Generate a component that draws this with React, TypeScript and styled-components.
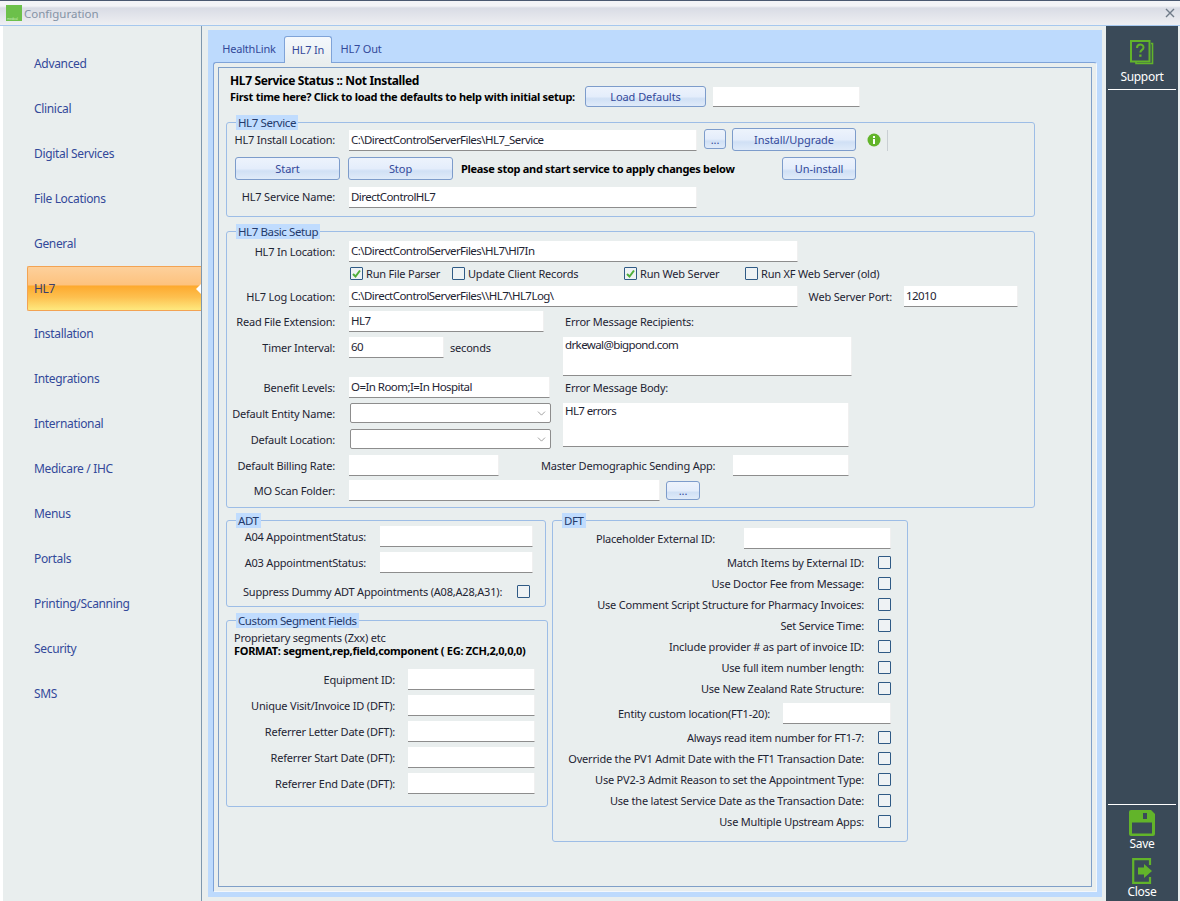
import React from 'react';
import styled, { createGlobalStyle } from 'styled-components';
import { ChevronDown } from 'lucide-react';

const GlobalStyle = createGlobalStyle`
  html, body { margin: 0; padding: 0; background: #e9eeee; }
  * { box-sizing: border-box; }
  body { font-family: "Noto Sans", "Liberation Sans", sans-serif; font-size: 11px; letter-spacing: -0.2px; color: #1e2433; }
`;

const Window = styled.div`
  width: 1180px;
  height: 901px;
  display: flex;
  flex-direction: column;
  overflow: hidden;
  background: #e9eeee;
`;

const TitleBar = styled.div`
  height: 26px;
  flex: none;
  display: flex;
  align-items: center;
  padding: 0 5px 0 6px;
  border-top: 1px solid #4a5870;
  border-bottom: 1px solid #a6c8ee;
  background: linear-gradient(#f3f4f7 0, #f3f4f7 5px, #d9dce5 7px, #eeeff2 100%);
`;

const TitleText = styled.span`
  margin-left: 2px;
  font-size: 11.5px;
  letter-spacing: 0;
  color: #8593a5;
  flex: 1;
`;

const Main = styled.div`
  flex: 1;
  display: flex;
  min-height: 0;
`;

const Sidebar = styled.nav`
  width: 202px;
  flex: none;
  padding: 15px 0 0 24px;
  background: #e9eeee;
  border-left: 3px solid #fff;
  border-right: 1px solid #7f97ad;
`;

const NavItem = styled.div<{ $active?: boolean }>`
  position: relative;
  height: 45px;
  display: flex;
  align-items: center;
  padding-left: 7px;
  font-size: 12px;
  letter-spacing: -0.33px;
  color: ${(p) => (p.$active ? '#3a3f6e' : '#33499a')};
  ${(p) =>
    p.$active &&
    `
    background: linear-gradient(#fdd09b 0, #fdc27e 42%, #fda92e 44%, #fdc04f 70%, #fee97f 100%);
    border: 1px solid #f3a353;
    border-right: none;
    border-radius: 2px 0 0 2px;
    padding-left: 6px;
    &::after {
      content: '';
      position: absolute;
      right: 0;
      top: 17px;
      border: 5px solid transparent;
      border-right-color: #fff;
      border-left: none;
    }
  `}
`;

const Content = styled.div`
  flex: 1;
  min-width: 0;
  padding: 4px 4px 4px 6px;
`;

const TabPanel = styled.div`
  height: 100%;
  display: flex;
  flex-direction: column;
  background: #bddafd;
  padding: 0 5px 5px 5px;
`;

const TabStrip = styled.div`
  height: 32px;
  flex: none;
  display: flex;
  align-items: flex-end;
  padding-left: 1px;
`;

const Tab = styled.div<{ $active?: boolean; $w: number }>`
  width: ${(p) => p.$w}px;
  height: 26px;
  text-align: center;
  line-height: 25px;
  font-size: 11px;
  color: #33499a;
  ${(p) =>
    p.$active &&
    `
    background: linear-gradient(#f4f8fd, #e9eeee);
    border: 1px solid #7fa3d8;
    border-bottom: none;
    border-radius: 3px 3px 0 0;
    margin-bottom: -1px;
    height: 27px;
    position: relative;
  `}
`;

const TabPage = styled.div`
  flex: 1;
  padding: 4px;
  background: #e9eeee;
  border: 1px solid #7fa3d8;
  border-right-color: #f3f7fc;
  border-bottom-color: #f3f7fc;
  border-radius: 3px 3px 0 0;
`;

const Page = styled.div`
  height: 100%;
  padding: 5px 0 0 7px;
  border: 1px solid #7f9fc8;
`;

const StatusLine = styled.div`
  height: 16px;
  margin-left: 4px;
  line-height: 16px;
  font-size: 12px;
  font-weight: 700;
  letter-spacing: -0.35px;
  color: #000;
`;

const Row = styled.div<{ $h?: number; $mt?: number; $end?: boolean }>`
  display: flex;
  align-items: ${(p) => (p.$end ? 'flex-end' : 'center')};
  height: ${(p) => p.$h ?? 21}px;
  margin-top: ${(p) => p.$mt ?? 0}px;
`;

const BoldText = styled.span<{ $ml?: number; $w?: number }>`
  flex: none;
  font-weight: 700;
  letter-spacing: -0.29px;
  color: #000;
  white-space: nowrap;
  margin-left: ${(p) => p.$ml ?? 0}px;
  ${(p) => (p.$w ? `width: ${p.$w}px;` : '')}
`;

const PlainText = styled.span<{ $ml?: number; $w?: number }>`
  flex: none;
  white-space: nowrap;
  margin-left: ${(p) => p.$ml ?? 0}px;
  ${(p) => (p.$w ? `width: ${p.$w}px;` : '')}
`;

const Label = styled.label<{ $w: number; $mb?: number }>`
  width: ${(p) => p.$w}px;
  flex: none;
  margin-bottom: ${(p) => p.$mb ?? 0}px;
  text-align: right;
  white-space: nowrap;
`;

const TextInput = styled.input<{ $w: number; $h?: number; $ml?: number }>`
  width: ${(p) => p.$w}px;
  height: ${(p) => p.$h ?? 21}px;
  flex: none;
  margin: 0 0 0 ${(p) => p.$ml ?? 0}px;
  padding: 0 2px 1px 2px;
  border: none;
  border-bottom: 1px solid #8d8d8d;
  border-right: 1px solid #f0f0f0;
  background: #fff;
  font: inherit;
  font-size: 11.5px;
  letter-spacing: -0.55px;
  color: #1e2433;
  outline: none;
`;

const TextArea = styled.textarea<{ $w: number; $h: number; $mt: number; $pt: number }>`
  display: block;
  width: ${(p) => p.$w}px;
  height: ${(p) => p.$h}px;
  margin: ${(p) => p.$mt}px 0 0 0;
  padding: ${(p) => p.$pt}px 2px 0 2px;
  border: none;
  border-bottom: 1px solid #8d8d8d;
  border-right: 1px solid #f0f0f0;
  background: #fff;
  font: inherit;
  font-size: 11.5px;
  letter-spacing: -0.6px;
  color: #1e2433;
  resize: none;
  outline: none;
  overflow: hidden;
`;

const Button = styled.button<{ $w: number; $h?: number; $ml?: number; $mb?: number }>`
  width: ${(p) => p.$w}px;
  height: ${(p) => p.$h ?? 23}px;
  flex: none;
  margin: 0 0 ${(p) => p.$mb ?? 0}px ${(p) => p.$ml ?? 0}px;
  padding: 0;
  border: 1px solid #7d9ccb;
  border-radius: 3px;
  background: linear-gradient(#edf3fc 0, #e4edfb 50%, #d0e0f5 62%, #e0ebf9 100%);
  font: inherit;
  letter-spacing: -0.05px;
  color: #33499a;
`;

const SelectBox = styled.div<{ $w: number; $ml: number }>`
  width: ${(p) => p.$w}px;
  height: 20px;
  flex: none;
  margin-left: ${(p) => p.$ml}px;
  display: flex;
  align-items: center;
  justify-content: flex-end;
  padding-right: 2px;
  background: #fff;
  border: 1px solid #8d8d8d;
  border-radius: 2px;
  color: #7a7a7a;
`;

const CheckBox = styled.span<{ $ml?: number }>`
  width: 13px;
  height: 13px;
  flex: none;
  margin-left: ${(p) => p.$ml ?? 0}px;
  display: inline-flex;
  align-items: center;
  justify-content: center;
  background: #eef2f4;
  border: 1px solid #2f5a85;
  border-radius: 1px;
`;

const CheckOption = styled.span<{ $w: number; $ml?: number }>`
  width: ${(p) => p.$w}px;
  flex: none;
  margin-left: ${(p) => p.$ml ?? 0}px;
  display: flex;
  align-items: center;
  gap: 3px;
  white-space: nowrap;
`;

const GroupBox = styled.fieldset<{ $w: number; $mt?: number; $ml?: number; $pb: number }>`
  width: ${(p) => p.$w}px;
  flex: none;
  margin: ${(p) => p.$mt ?? 0}px 0 0 ${(p) => p.$ml ?? 0}px;
  padding: 0 0 ${(p) => p.$pb}px 0;
  border: 1px solid #9dbde6;
  border-radius: 3px;
  min-width: 0;
`;

const GroupTitle = styled.legend`
  height: 15px;
  margin-left: 9px;
  padding: 0 2px;
  background: #c0dcfe;
  line-height: 15px;
  font-size: 11.5px;
  letter-spacing: -0.4px;
  color: #243a6b;
`;

const Columns = styled.div`
  display: flex;
  align-items: flex-start;
`;

const Column = styled.div<{ $w: number; $ml?: number }>`
  width: ${(p) => p.$w}px;
  flex: none;
  margin-left: ${(p) => p.$ml ?? 0}px;
`;

const InfoDivider = styled.span`
  width: 1px;
  height: 21px;
  margin: 0 0 0 6px;
  background: #c9cfd3;
`;

const InfoIcon = styled.svg`
  flex: none;
  margin: 0 0 4px 11px;
`;

const ActionRail = styled.aside`
  width: 72px;
  flex: none;
  margin-right: 2px;
  padding-bottom: 1px;
  display: flex;
  flex-direction: column;
  background: #3a4a58;
  color: #fff;
  font-size: 12px;
  letter-spacing: -0.3px;
`;

const RailItem = styled.div<{ $h: number; $gap?: number }>`
  height: ${(p) => p.$h}px;
  display: flex;
  flex-direction: column;
  align-items: center;
  justify-content: flex-end;
  gap: ${(p) => p.$gap ?? 0}px;
  line-height: 16px;
`;

const RailRule = styled.div<{ $mt?: number }>`
  height: 1px;
  margin: ${(p) => p.$mt ?? 0}px 2px 0 2px;
  background: #fff;
`;

const RailSpacer = styled.div`
  flex: 1;
`;

const navItems = [
  'Advanced', 'Clinical', 'Digital Services', 'File Locations', 'General', 'HL7', 'Installation', 'Integrations',
  'International', 'Medicare / IHC', 'Menus', 'Portals', 'Printing/Scanning', 'Security', 'SMS',
];

const firstDftChecks = [
  'Match Items by External ID:',
  'Use Doctor Fee from Message:',
  'Use Comment Script Structure for Pharmacy Invoices:',
  'Set Service Time:',
  'Include provider # as part of invoice ID:',
  'Use full item number length:',
  'Use New Zealand Rate Structure:',
];

const secondDftChecks = [
  'Always read item number for FT1-7:',
  'Override the PV1 Admit Date with the FT1 Transaction Date:',
  'Use PV2-3 Admit Reason to set the Appointment Type:',
  'Use the latest Service Date as the Transaction Date:',
  'Use Multiple Upstream Apps:',
];

const customFields = [
  'Equipment ID:',
  'Unique Visit/Invoice ID (DFT):',
  'Referrer Letter Date (DFT):',
  'Referrer Start Date (DFT):',
  'Referrer End Date (DFT):',
];

const Tick = () => (
  <svg width="11" height="11" viewBox="0 0 11 11">
    <path d="M2 6l2.5 2.5L9 2.5" fill="none" stroke="#4fae3a" strokeWidth="2" />
  </svg>
);

const Check = ({ checked, ml }: { checked?: boolean; ml?: number }) => (
  <CheckBox $ml={ml}>{checked && <Tick />}</CheckBox>
);

const AppIcon = () => (
  <svg width="16" height="16" viewBox="0 0 16 16">
    <rect width="16" height="16" fill="#6cc04a" />
    <text x="1" y="14.500" fontSize="3.500" fontFamily="Liberation Sans, sans-serif" fill="#c4ebb2">medical</text>
  </svg>
);

const CloseX = () => (
  <svg width="10" height="10" viewBox="0 0 10 10">
    <path d="M1 1l8 8M9 1l-8 8" stroke="#6f7b88" strokeWidth="1.4" />
  </svg>
);

const SupportIcon = () => (
  <svg width="24" height="26" viewBox="0 0 24 26" fill="none">
    <path d="M21 3.5h1.5v20H6V22" stroke="#62b42a" strokeWidth="1.6" />
    <rect x="1" y="1" width="18.5" height="20.5" stroke="#62b42a" strokeWidth="2" />
    <path d="M7 8c0-4.5 6.500-4.500 6.500-.6 0 2.600-3.200 2.300-3.200 5.100" stroke="#62b42a" strokeWidth="2" />
    <rect x="9.200" y="14.500" width="2.300" height="2.300" fill="#62b42a" />
  </svg>
);

const SaveIcon = () => (
  <svg width="26" height="26" viewBox="0 0 26 26">
    <path
      fillRule="evenodd"
      d="M2 0h20l4 4v20a2 2 0 0 1-2 2H2a2 2 0 0 1-2-2V2a2 2 0 0 1 2-2zM14 3v6h4V3zM3 12.500v11h20v-11z"
      fill="#62b42a"
    />
  </svg>
);

const ExitIcon = () => (
  <svg width="20" height="26" viewBox="0 0 20 26" fill="none">
    <path d="M18 7V1.200H1.200v23.600H18V19" stroke="#62b42a" strokeWidth="2.200" />
    <path d="M6 9.500h6V6l8 7-8 7v-3.500H6z" fill="#62b42a" />
  </svg>
);

const App: React.FC = () => {
  return (
    <>
      <GlobalStyle />
      <Window>
        <TitleBar>
          <AppIcon />
          <TitleText>Configuration</TitleText>
          <CloseX />
        </TitleBar>
        <Main>
          <Sidebar>
            {navItems.map((item) => (
              <NavItem key={item} $active={item === 'HL7'}>
                {item}
              </NavItem>
            ))}
          </Sidebar>
          <Content>
            <TabPanel>
              <TabStrip>
                <Tab $w={70}>HealthLink</Tab>
                <Tab $w={48} $active>HL7 In</Tab>
                <Tab $w={58}>HL7 Out</Tab>
              </TabStrip>
              <TabPage>
                <Page>
                  <StatusLine>HL7 Service Status :: Not Installed</StatusLine>
                  <Row $mt={-3}>
                    <BoldText $ml={4} $w={355}>First time here? Click to load the defaults to help with initial setup:</BoldText>
                    <Button $w={121} $h={21}>Load Defaults</Button>
                    <TextInput $w={147} $h={20} $ml={7} readOnly />
                  </Row>

                  <GroupBox $w={809} $mt={8} $pb={8}>
                    <GroupTitle>HL7 Service</GroupTitle>
                    <Row $h={23} $mt={-2} $end>
                      <Label $w={108} $mb={4}>HL7 Install Location:</Label>
                      <TextInput $w={348} $ml={14} readOnly defaultValue="C:\DirectControlServerFiles\HL7_Service" />
                      <Button $w={22} $h={20} $ml={7} $mb={2}>...</Button>
                      <Button $w={124} $ml={6}>Install/Upgrade</Button>
                      <InfoIcon width="14" height="14" viewBox="0 0 14 14">
                        <circle cx="7" cy="7" r="6.500" fill="#62b42a" />
                        <rect x="6" y="6" width="2" height="5" fill="#fff" />
                        <rect x="6" y="3" width="2" height="2" fill="#fff" />
                      </InfoIcon>
                      <InfoDivider />
                    </Row>
                    <Row $h={23} $mt={6}>
                      <Button $w={105} $ml={8}>Start</Button>
                      <Button $w={105} $ml={8}>Stop</Button>
                      <BoldText $ml={8} $w={321}>Please stop and start service to apply changes below</BoldText>
                      <Button $w={74}>Un-install</Button>
                    </Row>
                    <Row $mt={7}>
                      <Label $w={108} $mb={3}>HL7 Service Name:</Label>
                      <TextInput $w={348} $ml={14} readOnly defaultValue="DirectControlHL7" />
                    </Row>
                  </GroupBox>

                  <GroupBox $w={809} $mt={7} $pb={6}>
                    <GroupTitle>HL7 Basic Setup</GroupTitle>
                    <Row $mt={2}>
                      <Label $w={108}>HL7 In Location:</Label>
                      <TextInput $w={449} $ml={14} readOnly defaultValue="C:\DirectControlServerFiles\HL7\Hl7In" />
                    </Row>
                    <Row $h={22}>
                      <CheckOption $w={102} $ml={123}><Check checked />Run File Parser</CheckOption>
                      <CheckOption $w={172}><Check />Update Client Records</CheckOption>
                      <CheckOption $w={121}><Check checked />Run Web Server</CheckOption>
                      <CheckOption $w={150}><Check />Run XF Web Server (old)</CheckOption>
                    </Row>
                    <Row $mt={2}>
                      <Label $w={108}>HL7 Log Location:</Label>
                      <TextInput $w={449} $ml={14} readOnly defaultValue="C:\DirectControlServerFiles\\HL7\HL7Log\" />
                      <Label $w={94}>Web Server Port:</Label>
                      <TextInput $w={114} $ml={12} readOnly defaultValue="12010" />
                    </Row>
                    <Columns>
                      <Column $w={325}>
                        <Row $mt={4}>
                          <Label $w={108}>Read File Extension:</Label>
                          <TextInput $w={195} $ml={14} readOnly defaultValue="HL7" />
                        </Row>
                        <Row $h={22} $mt={4}>
                          <Label $w={108}>Timer Interval:</Label>
                          <TextInput $w={95} $ml={14} readOnly defaultValue="60" />
                          <PlainText $ml={6}>seconds</PlainText>
                        </Row>
                        <Row $mt={19}>
                          <Label $w={108}>Benefit Levels:</Label>
                          <TextInput $w={201} $ml={14} readOnly defaultValue="O=In Room;I=In Hospital" />
                        </Row>
                        <Row $h={20} $mt={5}>
                          <Label $w={108}>Default Entity Name:</Label>
                          <SelectBox $w={201} $ml={15}><ChevronDown size={13} strokeWidth={1.3} /></SelectBox>
                        </Row>
                        <Row $h={20} $mt={6}>
                          <Label $w={108}>Default Location:</Label>
                          <SelectBox $w={201} $ml={15}><ChevronDown size={13} strokeWidth={1.3} /></SelectBox>
                        </Row>
                      </Column>
                      <Column $w={300} $ml={11}>
                        <Row $mt={4}><PlainText $ml={2}>Error Message Recipients:</PlainText></Row>
                        <TextArea $w={289} $h={39} $mt={5} $pt={0} readOnly defaultValue="drkewal@bigpond.com" />
                        <Row $h={20} $mt={1}><PlainText $ml={2}>Error Message Body:</PlainText></Row>
                        <TextArea $w={286} $h={44} $mt={6} $pt={0} readOnly defaultValue="HL7 errors" />
                      </Column>
                    </Columns>
                    <Row $mt={6}>
                      <Label $w={108}>Default Billing Rate:</Label>
                      <TextInput $w={150} $ml={14} readOnly />
                      <PlainText $ml={42} $w={192}>Master Demographic Sending App:</PlainText>
                      <TextInput $w={116} readOnly />
                    </Row>
                    <Row $mt={4}>
                      <Label $w={108}>MO Scan Folder:</Label>
                      <TextInput $w={311} $ml={14} readOnly />
                      <Button $w={34} $h={19} $ml={6}>...</Button>
                    </Row>
                  </GroupBox>

                  <Columns>
                    <Column $w={322}>
                      <GroupBox $w={320} $mt={5} $pb={4}>
                        <GroupTitle>ADT</GroupTitle>
                        <Row $mt={-2}>
                          <Label $w={139}>A04 AppointmentStatus:</Label>
                          <TextInput $w={153} $ml={14} readOnly />
                        </Row>
                        <Row $mt={5}>
                          <Label $w={139}>A03 AppointmentStatus:</Label>
                          <TextInput $w={153} $ml={14} readOnly />
                        </Row>
                        <Row $mt={8}>
                          <PlainText $ml={16} $w={259}>Suppress Dummy ADT Appointments (A08,A28,A31):</PlainText>
                          <Check ml={15} />
                        </Row>
                      </GroupBox>
                      <GroupBox $w={322} $mt={6} $pb={12}>
                        <GroupTitle>Custom Segment Fields</GroupTitle>
                        <Row $h={13} $mt={3}><PlainText $ml={7}>Proprietary segments (Zxx) etc</PlainText></Row>
                        <Row $h={13}><BoldText $ml={7}>FORMAT: segment,rep,field,component ( EG: ZCH,2,0,0,0)</BoldText></Row>
                        {customFields.map((field, i) => (
                          <Row key={field} $mt={i === 0 ? 12 : 5}>
                            <Label $w={168}>{field}</Label>
                            <TextInput $w={127} $ml={13} readOnly />
                          </Row>
                        ))}
                      </GroupBox>
                    </Column>
                    <GroupBox $w={356} $mt={5} $ml={4} $pb={9}>
                      <GroupTitle>DFT</GroupTitle>
                      <Row>
                        <Label $w={162}>Placeholder External ID:</Label>
                        <TextInput $w={147} $ml={29} readOnly />
                      </Row>
                      <Row $h={3} />
                      {firstDftChecks.map((text) => (
                        <Row key={text}>
                          <Label $w={311}>{text}</Label>
                          <Check ml={14} />
                        </Row>
                      ))}
                      <Row $mt={4}>
                        <Label $w={217}>Entity custom location(FT1-20):</Label>
                        <TextInput $w={108} $ml={13} readOnly />
                      </Row>
                      <Row $h={3} />
                      {secondDftChecks.map((text) => (
                        <Row key={text}>
                          <Label $w={311}>{text}</Label>
                          <Check ml={14} />
                        </Row>
                      ))}
                    </GroupBox>
                  </Columns>
                </Page>
              </TabPage>
            </TabPanel>
          </Content>
          <ActionRail>
            <RailItem $h={59} $gap={3}>
              <SupportIcon />
              Support
            </RailItem>
            <RailRule $mt={4} />
            <RailSpacer />
            <RailRule />
            <RailItem $h={47}>
              <SaveIcon />
              Save
            </RailItem>
            <RailItem $h={48}>
              <ExitIcon />
              Close
            </RailItem>
          </ActionRail>
        </Main>
      </Window>
    </>
  );
};

export default App;
